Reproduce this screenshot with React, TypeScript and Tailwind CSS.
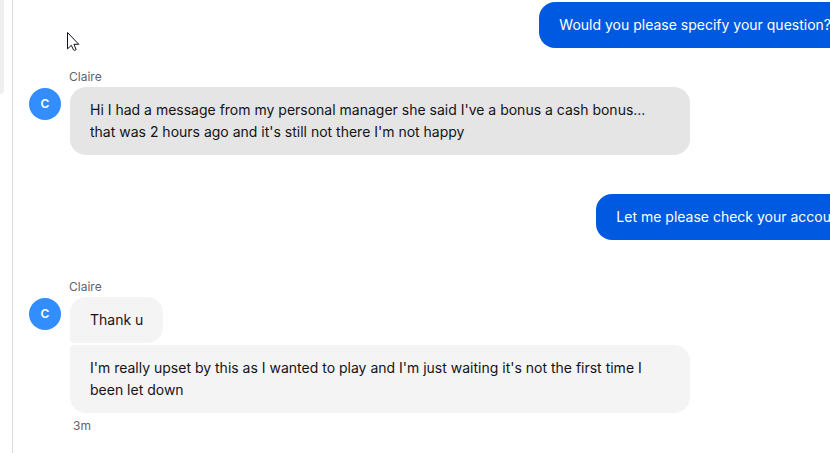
interface Message {
  text: string;
  highlighted?: boolean;
}

interface MessageGroup {
  id: number;
  author: "customer" | "agent";
  name?: string;
  time?: string;
  messages: Message[];
}

const groups: MessageGroup[] = [
  { id: 1, author: "agent", messages: [{ text: "Would you please specify your question?" }] },
  {
    id: 2,
    author: "customer",
    name: "Claire",
    messages: [
      {
        text: "Hi I had a message from my personal manager she said I've a bonus a cash bonus... that was 2 hours ago and it's still not there I'm not happy",
        highlighted: true,
      },
    ],
  },
  { id: 3, author: "agent", messages: [{ text: "Let me please check your accou" }] },
  {
    id: 4,
    author: "customer",
    name: "Claire",
    time: "3m",
    messages: [
      { text: "Thank u" },
      { text: "I'm really upset by this as I wanted to play and I'm just waiting it's not the first time I been let down" },
    ],
  },
];

function getBubbleCorners(index: number, count: number) {
  if (count === 1) return "rounded-2xl";
  if (index === 0) return "rounded-2xl rounded-bl";
  if (index === count - 1) return "rounded-2xl rounded-tl";
  return "rounded-2xl rounded-l";
}

function CustomerGroup({ group }: { group: MessageGroup }) {
  return (
    <section className="pl-4">
      <p className="mb-[2px] pl-10 text-[12px] leading-4 text-[#62626d]">{group.name}</p>
      <div className="flex items-start gap-[9px]">
        <div className="mt-px flex size-8 shrink-0 items-center justify-center rounded-full bg-[#328dff] text-[12px] font-semibold text-white">
          {group.name?.charAt(0)}
        </div>
        <div className="flex min-w-0 max-w-[620px] flex-col items-start gap-[2px]">
          {group.messages.map((message, index) => (
            <p
              key={message.text}
              className={`px-5 py-3 ${message.highlighted ? "bg-[#e5e5e5]" : "bg-[#f4f4f4]"} ${getBubbleCorners(index, group.messages.length)}`}
            >
              {message.text}
            </p>
          ))}
          {group.time && <time className="mt-[3px] pl-[3px] text-[12px] leading-4 text-[#62626d]">{group.time}</time>}
        </div>
      </div>
    </section>
  );
}

function AgentGroup({ group }: { group: MessageGroup }) {
  return (
    <section className="-mr-[21px] flex flex-col items-end">
      {group.messages.map((message) => (
        <p key={message.text} className="whitespace-nowrap rounded-2xl bg-[#0059e1] px-5 py-3 text-white">
          {message.text}
        </p>
      ))}
    </section>
  );
}

function Pointer() {
  return (
    <svg className="absolute left-[67px] top-8" width="13" height="20" viewBox="0 0 13 20" aria-hidden="true">
      <path
        d="M.5 .5v16.4l3.8-3.6 2.2 4.6q1.2 1.2 2.6-.4l-2.2-5.2h4.9z"
        fill="#fff"
        stroke="#11111d"
        strokeWidth="1"
      />
    </svg>
  );
}

export default function App() {
  return (
    <div className="relative flex min-h-screen overflow-hidden bg-white font-['Inter','Liberation_Sans',sans-serif] text-[14px] leading-[22px] text-[#131317]">
      <aside className="w-[13px] shrink-0 border-r border-[#dddddd] pr-2">
        <div className="h-[94px] rounded-br-lg bg-[#efefef]" />
      </aside>
      <main className="flex min-w-0 flex-1 flex-col pt-[2px]">
        <div className="flex flex-col gap-[39px]">
          <div className="flex flex-col gap-[21px]">
            {groups.slice(0, 2).map((group) =>
              group.author === "agent" ? (
                <AgentGroup key={group.id} group={group} />
              ) : (
                <CustomerGroup key={group.id} group={group} />
              )
            )}
          </div>
          {groups.slice(2).map((group) =>
            group.author === "agent" ? (
              <AgentGroup key={group.id} group={group} />
            ) : (
              <CustomerGroup key={group.id} group={group} />
            )
          )}
        </div>
      </main>
      <Pointer />
    </div>
  );
}
